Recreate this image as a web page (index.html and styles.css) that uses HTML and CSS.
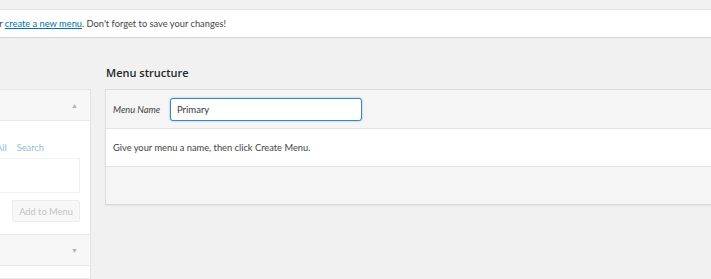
FILE: index.html
```html
<!DOCTYPE html>
<html>
<head>
  <title>Menus</title>
  <meta charset="UTF-8">
  <link rel="stylesheet" href="styles.css">
</head>
<body>

  <div class="wrap">
    <!-- Notice -->
    <div class="notice">
      <p>or <a href="#">create a new menu</a>. Don't forget to save your changes!</p>
    </div>

    <div class="columns">
      <!-- Left column (disabled) -->
      <div class="menu-settings">
        <div class="section">
          <div class="section-title"><span class="arrow">&#9650;</span></div>
          <div class="section-body">
            <div class="tabs">
              <a href="#">View All</a>
              <a href="#">Search</a>
            </div>
            <div class="tab-panel"></div>
            <div class="button-row">
              <span class="button">Add to Menu</span>
            </div>
          </div>
        </div>
        <div class="section">
          <div class="section-title"><span class="arrow">&#9660;</span></div>
        </div>
        <div class="section">
          <div class="section-title blank"></div>
        </div>
      </div>

      <!-- Menu structure -->
      <div class="menu-edit">
        <h2>Menu structure</h2>
        <div class="menu-box">
          <div class="menu-header">
            <label>Menu Name</label>
            <input type="text" value="Primary">
          </div>
          <div class="menu-body">
            <p>Give your menu a name, then click Create Menu.</p>
          </div>
          <div class="menu-footer"></div>
        </div>
      </div>
    </div>
  </div>

</body>
</html>
```

FILE: styles.css
```css
html, body {
  margin: 0;
  height: 100%;
}

body {
  background-color: #f1f1f1;
  font-family: Lato, "Open Sans", sans-serif;
  font-size: 9.3px;
  color: #444;
}

.wrap {
  margin-left: -20px;
  padding-top: 9px;
}

/* Notice */
.notice {
  background-color: #fff;
  border-top: 1px solid #e5e5e5;
  border-bottom: 1px solid #d6d6d6;
  height: 27px;
  display: flex;
  align-items: center;
  padding-left: 14px;
}

.notice p {
  margin: 0;
}

.notice a {
  color: #0073aa;
}

.columns {
  display: flex;
  align-items: flex-start;
  margin-top: 27px;
}

/* Left column */
.menu-settings {
  width: 110px;
  flex-shrink: 0;
  margin-top: 24px;
  border-top: 1px solid #e6e6e6;
  border-right: 1px solid #e2e2e2;
  box-shadow: inset -3px 0 0 #f8f8f8;
}

.section-title {
  height: 30px;
  background-color: #f7f7f7;
  border-bottom: 1px solid #e9e9e9;
  display: flex;
  align-items: center;
  justify-content: flex-end;
  padding-right: 12px;
}

.section-title.blank {
  background-color: #fff;
  height: 12px;
}

.arrow {
  font-size: 7px;
  color: #b0b0b0;
}

.section-body {
  background-color: #fff;
  padding: 21px 10px 12px 0;
  border-bottom: 1px solid #e9e9e9;
}

.tabs {
  display: flex;
  justify-content: flex-end;
  gap: 10px;
  padding-right: 36px;
  line-height: 12px;
}

.tabs a {
  color: #8fc0d9;
  text-decoration: none;
  white-space: nowrap;
  flex-shrink: 0;
}

.tab-panel {
  height: 33px;
  margin-top: 4px;
  border: 1px solid #f0f0f0;
}

.button-row {
  display: flex;
  justify-content: flex-end;
  margin-top: 7px;
}

.button {
  background-color: #f7f7f7;
  border: 1px solid #ececec;
  border-radius: 2px;
  color: #c4c4c4;
  height: 20px;
  width: 66px;
  display: flex;
  align-items: center;
  justify-content: center;
}

/* Menu structure */
.menu-edit {
  margin-left: 14px;
  flex: 1;
}

.menu-edit h2 {
  margin: 0 0 9px 1px;
  font-family: "Open Sans", sans-serif;
  font-size: 11px;
  font-weight: 600;
  color: #23282d;
}

.menu-box {
  border: 1px solid #dcdcdc;
  border-right: none;
  box-shadow: 0 1px 1px rgba(0, 0, 0, 0.05);
}

.menu-header {
  background-color: #f5f5f5;
  height: 38px;
  border-bottom: 1px solid #e3e3e3;
  display: flex;
  align-items: center;
  padding-left: 7px;
}

.menu-header label {
  font-style: italic;
  width: 57px;
}

.menu-header input {
  font-family: Lato, "Open Sans", sans-serif;
  font-size: 9.5px;
  color: #32373c;
  width: 178px;
  height: 21px;
  padding: 0 6px;
  border: 1px solid #3a87b8;
  border-radius: 3px;
  box-shadow: 0 0 2px rgba(30, 140, 190, 0.6);
  outline: none;
}

.menu-body {
  background-color: #fff;
  height: 37px;
  border-bottom: 1px solid #e3e3e3;
  display: flex;
  align-items: center;
  padding-left: 7px;
}

.menu-body p {
  margin: 0;
}

.menu-footer {
  background-color: #f5f5f5;
  height: 37px;
}
```
